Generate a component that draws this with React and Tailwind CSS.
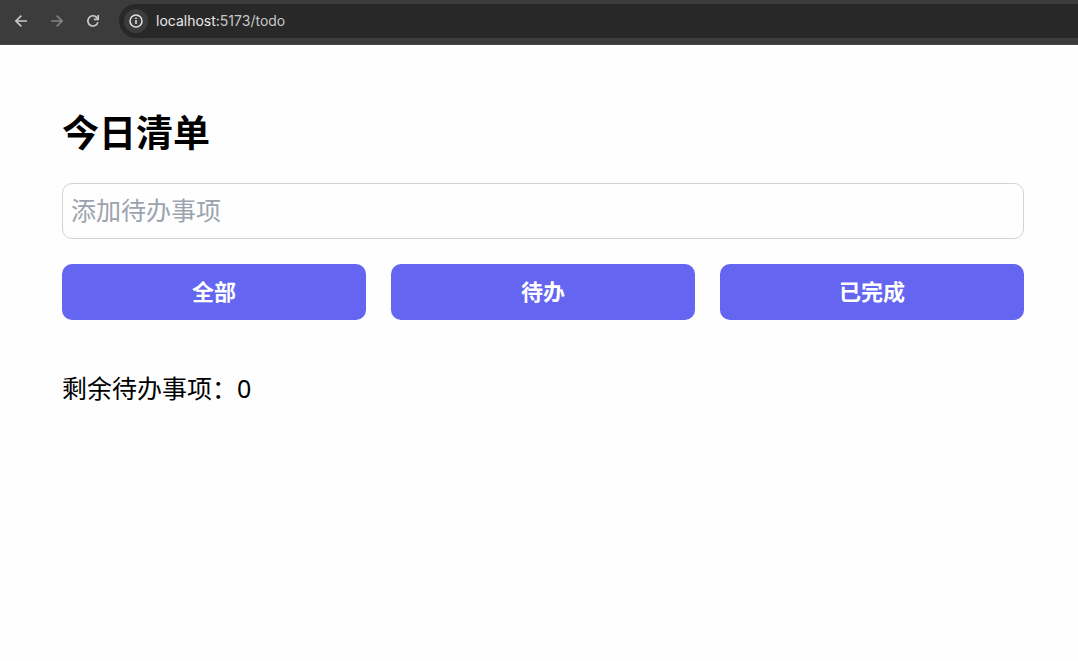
import { useState } from 'react';

const filters = ['全部', '待办', '已完成'];

function Icon({ children, width = 1.7 }) {
  return (
    <svg
      className="block size-[18px]"
      viewBox="0 0 18 18"
      fill="none"
      stroke="currentColor"
      strokeWidth={width}
      aria-hidden="true"
    >
      {children}
    </svg>
  );
}

function BrowserBar() {
  return (
    <header className="flex items-center bg-[#3c3c3c] pt-1 pb-[6px] pl-3 border-b border-[#4a4a4a] font-['Inter','Liberation_Sans',sans-serif]">
      <nav aria-label="Browser" className="flex items-center gap-[18px] text-[#c7c7c7]">
        <button type="button" aria-label="Back">
          <Icon><path d="M15 9H4.2M9.3 3.6L3.9 9l5.4 5.4" /></Icon>
        </button>
        <button type="button" aria-label="Forward" className="text-[#828282]">
          <Icon><path d="M3 9h10.8M8.7 3.6L14.1 9l-5.4 5.4" /></Icon>
        </button>
        <button type="button" aria-label="Reload">
          <Icon>
            <path d="M13.9 10.2A5.1 5.1 0 1 1 12.9 5.6L14.2 7.2" />
            <path d="M14.2 3v4.4H9.8" />
          </Icon>
        </button>
      </nav>
      <div className="ml-[17px] flex h-[34px] flex-1 items-center gap-2 rounded-l-full bg-[#282828] pl-[5px]">
        <button type="button" aria-label="Site information" className="flex size-6 items-center justify-center rounded-full bg-[#3c3c3c] text-[#e3e3e3]">
          <Icon width={1.5}>
            <circle cx="9" cy="9" r="6" />
            <path d="M9 8.1v4M9 5.4v1.7" />
          </Icon>
        </button>
        <span className="text-sm text-[#c7c7c7]">
          <span className="text-[#e8e8e8]">localhost:</span>5173/todo
        </span>
      </div>
    </header>
  );
}

export default function App() {
  const [text, setText] = useState('');
  return (
    <div className="min-h-screen bg-[#fefefe] text-black">
      <BrowserBar />
      <main className="pt-[60px] pr-[54px] pl-[62px] font-['Noto_Sans','Noto_Sans_CJK_SC',sans-serif]">
        <h1 className="text-[37px] leading-[56px] font-bold">今日清单</h1>
        <input
          type="text"
          aria-label="添加待办事项"
          placeholder="添加待办事项"
          value={text}
          onChange={(e) => setText(e.target.value)}
          className="mt-[22px] block h-14 w-full rounded-[10px] border border-[#d1d3d6] px-2 pb-[2px] text-[25px] placeholder:text-[#9ca3af]"
        />
        <div className="mt-[25px] grid grid-cols-3 gap-[25px]">
          {filters.map((name) => (
            <button key={name} type="button" className="h-14 rounded-[10px] bg-[#6466f1] pb-[2px] text-[22px] font-bold text-white">
              {name}
            </button>
          ))}
        </div>
        <p className="mt-[50px] text-[25px] leading-[36px]">剩余待办事项：0</p>
      </main>
    </div>
  );
}
